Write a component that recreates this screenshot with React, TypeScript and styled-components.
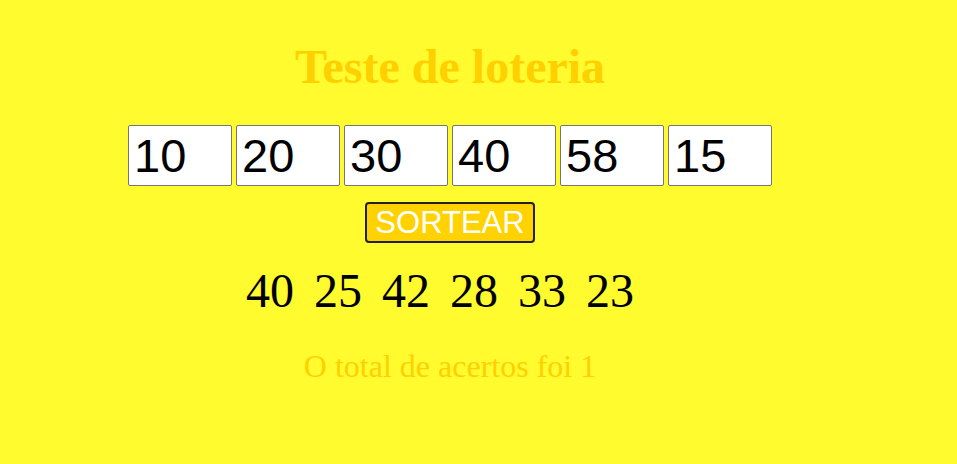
import React from "react";
import styled, { createGlobalStyle } from "styled-components";

const Global = createGlobalStyle`
  html, body { margin: 0; padding: 0; background: #fffb2e; }
  body { font-family: "Liberation Serif", "Times New Roman", serif; }
`;

const Page = styled.main`
  width: 900px;
  display: flex;
  flex-direction: column;
  align-items: center;
  padding-top: 38px;
`;

const Title = styled.h1`
  margin: 0;
  font-family: "Liberation Serif", serif;
  font-weight: bold;
  font-size: 48px;
  line-height: 58px;
  color: #ffd000;
`;

const InputRow = styled.div`
  display: flex;
  gap: 4px;
  margin-top: 29px;
`;

const NumberInput = styled.input`
  box-sizing: border-box;
  width: 104px;
  height: 61px;
  padding: 0 5px;
  border: 1px solid #767676;
  border-radius: 2px;
  background: #ffffff;
  font-family: "Liberation Sans", Arial, sans-serif;
  font-size: 47px;
  color: #000;
  outline: none;
`;

const DrawButton = styled.button`
  box-sizing: border-box;
  margin-top: 16px;
  width: 170px;
  height: 41px;
  padding: 0;
  background: #ffd200;
  border: 2px solid #222;
  border-radius: 4px;
  color: #ffffff;
  font-family: "Liberation Sans", Arial, sans-serif;
  font-size: 31px;
  line-height: 1;
  cursor: pointer;
`;

const Drawn = styled.div`
  margin-top: 20px;
  display: flex;
  font-family: "Liberation Serif", serif;
  font-size: 48px;
  line-height: 55px;
  color: #000;
`;

const Ball = styled.span`
  margin-right: 20px;
`;

const Result = styled.p`
  margin: 30px 0 0;
  font-family: "Liberation Serif", serif;
  font-size: 32px;
  color: #ffd000;
`;

export default function App() {
  const picks = ["10", "20", "30", "40", "58", "15"];
  const drawn = [40, 25, 42, 28, 33, 23];
  return (
    <>
      <Global />
      <Page>
        <Title>Teste de loteria</Title>
        <InputRow>
          {picks.map((v, i) => (
            <NumberInput key={i} defaultValue={v} />
          ))}
        </InputRow>
        <DrawButton>SORTEAR</DrawButton>
        <Drawn>
          {drawn.map((n, i) => (
            <Ball key={i}>{n}</Ball>
          ))}
        </Drawn>
        <Result>O total de acertos foi 1</Result>
      </Page>
    </>
  );
}
